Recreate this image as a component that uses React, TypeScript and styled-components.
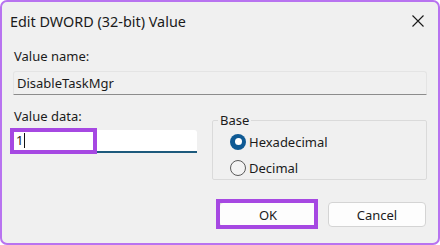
import React from "react";
import styled, { createGlobalStyle } from "styled-components";

const Global = createGlobalStyle`
  html, body { margin: 0; padding: 0; background: #ffffff; }
  body { font-family: "Segoe UI", "Noto Sans", "Liberation Sans", sans-serif; color: #1b1b1b; }
  * { box-sizing: border-box; }
`;

const purpleFrame = "#b873f0";
const purpleMark = "#a648e2";

const Dialog = styled.div`
  width: 440px;
  height: 245px;
  border: 2px solid ${purpleFrame};
  border-radius: 7px;
  background: #f0f0f0;
  display: flex;
  flex-direction: column;
  overflow: hidden;
`;

const TitleBar = styled.div`
  height: 36px;
  display: flex;
  align-items: center;
  justify-content: space-between;
  padding: 0 14px 0 8px;
`;

const Title = styled.div`
  font-size: 14.4px;
  color: #1a1a1a;
  margin-top: 2px;
`;

const CloseBtn = styled.div`
  width: 12px;
  height: 12px;
  display: flex;
  margin-top: 2px;
`;

const Body = styled.div`
  padding: 10px 11px 0 11px;
  display: flex;
  flex-direction: column;
`;

const Label = styled.div`
  font-size: 13px;
  line-height: 16px;
  color: #1b1b1b;
  padding-left: 1px;
`;

const NameField = styled.div`
  margin-top: 7px;
  height: 24px;
  border: 1px solid #e4e4e4;
  border-bottom: 1px solid #8c8c8c;
  border-radius: 3px 3px 0 0;
  background: #f0f0f0;
  font-size: 13px;
  line-height: 22px;
  padding-left: 3px;
  color: #1b1b1b;
`;

const Row = styled.div`
  display: flex;
  margin-top: 13px;
  gap: 15px;
`;

const DataCol = styled.div`
  width: 184px;
  display: flex;
  flex-direction: column;
`;

const InputWrap = styled.div`
  position: relative;
  margin-top: 6px;
  height: 23px;
  background: #ffffff;
  border-bottom: 2px solid #1d5a7c;
  border-radius: 3px 3px 0 0;
  font-size: 13px;
  line-height: 21px;
  padding-left: 3px;
  display: flex;
  align-items: center;
`;

const Caret = styled.span`
  display: inline-block;
  width: 1px;
  height: 15px;
  background: #111;
  margin-left: 1px;
`;

const Highlight = styled.div<{ $w: number; $h: number; $l: number; $t: number }>`
  position: absolute;
  left: ${(p) => p.$l}px;
  top: ${(p) => p.$t}px;
  width: ${(p) => p.$w}px;
  height: ${(p) => p.$h}px;
  border: 4px solid ${purpleMark};
  pointer-events: none;
`;

const Group = styled.fieldset`
  flex: 1;
  margin: 3px 0 0 0;
  padding: 4px 0 0 0;
  border: 1px solid #dadada;
  border-radius: 2px;
  height: 69px;
  display: flex;
  flex-direction: column;
  gap: 9px;
`;

const Legend = styled.legend`
  font-size: 13px;
  padding: 0 2px;
  margin-left: 5px;
  color: #1b1b1b;
`;

const RadioRow = styled.div`
  display: flex;
  align-items: center;
  font-size: 13px;
  gap: 3px;
  height: 17px;
  padding-left: 17px;
`;

const Radio = styled.span<{ $on?: boolean }>`
  width: 16px;
  height: 16px;
  border-radius: 50%;
  display: flex;
  align-items: center;
  justify-content: center;
  background: ${(p) => (p.$on ? "#0f5a94" : "#f3f3f3")};
  border: ${(p) => (p.$on ? "none" : "1px solid #5a5a5a")};
  &::after {
    content: "";
    display: ${(p) => (p.$on ? "block" : "none")};
    width: 7px;
    height: 7px;
    border-radius: 50%;
    background: #ffffff;
  }
`;

const Buttons = styled.div`
  display: flex;
  justify-content: flex-end;
  gap: 11px;
  margin-top: 22px;
  padding-right: 1px;
`;

const BtnWrap = styled.div`
  position: relative;
  display: flex;
`;

const Button = styled.div`
  width: 98px;
  height: 25px;
  background: #fdfdfd;
  border: 1px solid #d4d4d4;
  border-radius: 4px;
  font-size: 13px;
  display: flex;
  align-items: center;
  justify-content: center;
  color: #1b1b1b;
`;

export default function App() {
  return (
    <>
      <Global />
      <Dialog>
        <TitleBar>
          <Title>Edit DWORD (32-bit) Value</Title>
          <CloseBtn>
            <svg width="12" height="12" viewBox="0 0 12 12">
              <path d="M0.5 0.5 L11.5 11.5 M11.5 0.5 L0.5 11.5" stroke="#1a1a1a" strokeWidth="1.1" fill="none" />
            </svg>
          </CloseBtn>
        </TitleBar>
        <Body>
          <Label>Value name:</Label>
          <NameField>DisableTaskMgr</NameField>
          <Row>
            <DataCol>
              <Label>Value data:</Label>
              <InputWrap>
                <span>1</span>
                <Caret />
                <Highlight $l={-3} $t={-2} $w={87} $h={26} />
              </InputWrap>
            </DataCol>
            <Group>
              <Legend>Base</Legend>
              <RadioRow>
                <Radio $on />
                Hexadecimal
              </RadioRow>
              <RadioRow>
                <Radio />
                Decimal
              </RadioRow>
            </Group>
          </Row>
          <Buttons>
            <BtnWrap>
              <Button>OK</Button>
              <Highlight $l={-3} $t={-3} $w={102} $h={30} />
            </BtnWrap>
            <BtnWrap>
              <Button>Cancel</Button>
            </BtnWrap>
          </Buttons>
        </Body>
      </Dialog>
    </>
  );
}
